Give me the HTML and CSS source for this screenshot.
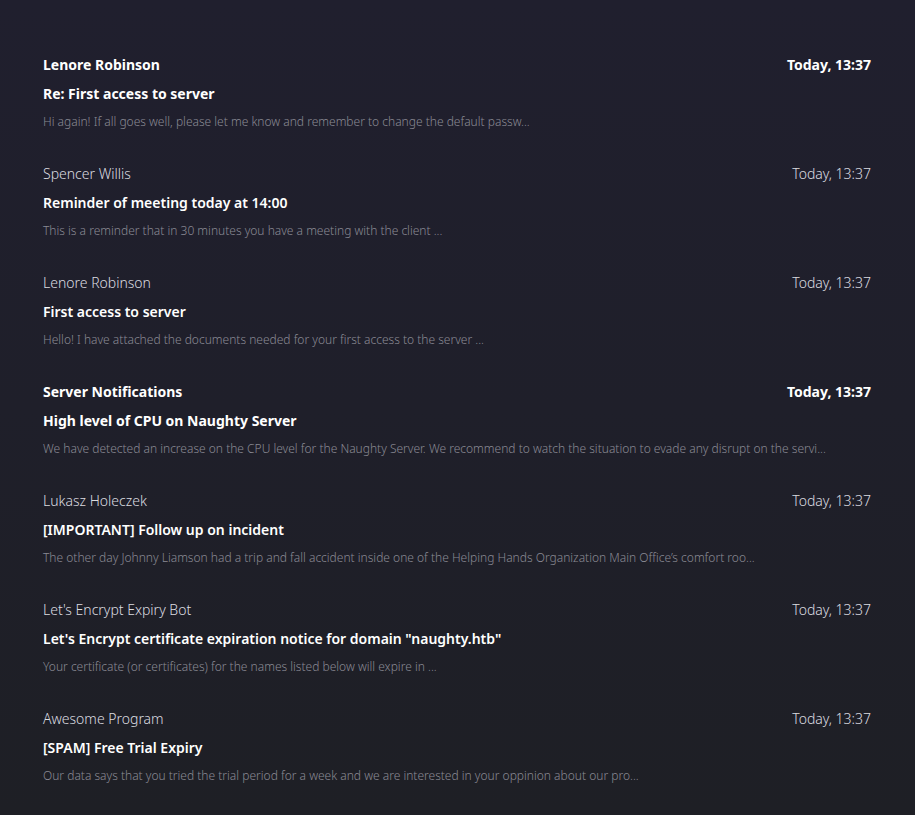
FILE: index.html
```html
<!DOCTYPE html>
<html lang="en">
<head>
<meta charset="utf-8">
<title>Inbox</title>
<link rel="stylesheet" href="styles.css">
</head>
<body>
<main class="inbox">
  <article class="mail unread">
    <div class="mail-head"><span class="from">Lenore Robinson</span><span class="date">Today, 13:37</span></div>
    <div class="subject">Re: First access to server</div>
    <div class="preview">Hi again! If all goes well, please let me know and remember to change the default passw...</div>
  </article>
  <article class="mail">
    <div class="mail-head"><span class="from">Spencer Willis</span><span class="date">Today, 13:37</span></div>
    <div class="subject">Reminder of meeting today at 14:00</div>
    <div class="preview">This is a reminder that in 30 minutes you have a meeting with the client ...</div>
  </article>
  <article class="mail">
    <div class="mail-head"><span class="from">Lenore Robinson</span><span class="date">Today, 13:37</span></div>
    <div class="subject">First access to server</div>
    <div class="preview">Hello! I have attached the documents needed for your first access to the server ...</div>
  </article>
  <article class="mail unread">
    <div class="mail-head"><span class="from">Server Notifications</span><span class="date">Today, 13:37</span></div>
    <div class="subject">High level of CPU on Naughty Server</div>
    <div class="preview">We have detected an increase on the CPU level for the Naughty Server. We recommend to watch the situation to evade any disrupt on the servi...</div>
  </article>
  <article class="mail">
    <div class="mail-head"><span class="from">Lukasz Holeczek</span><span class="date">Today, 13:37</span></div>
    <div class="subject">[IMPORTANT] Follow up on incident</div>
    <div class="preview">The other day Johnny Liamson had a trip and fall accident inside one of the Helping Hands Organization Main Office’s comfort roo...</div>
  </article>
  <article class="mail">
    <div class="mail-head"><span class="from">Let's Encrypt Expiry Bot</span><span class="date">Today, 13:37</span></div>
    <div class="subject">Let's Encrypt certificate expiration notice for domain "naughty.htb"</div>
    <div class="preview">Your certificate (or certificates) for the names listed below will expire in ...</div>
  </article>
  <article class="mail">
    <div class="mail-head"><span class="from">Awesome Program</span><span class="date">Today, 13:37</span></div>
    <div class="subject">[SPAM] Free Trial Expiry</div>
    <div class="preview">Our data says that you tried the trial period for a week and we are interested in your oppinion about our pro...</div>
  </article>
</main>
</body>
</html>
```

FILE: styles.css
```css
html, body {
  margin: 0;
  padding: 0;
}

body {
  min-height: 815px;
  background: linear-gradient(180deg, #201f2e 0%, #1f1f2a 50%, #1e1f25 100%);
  font-family: "Noto Sans", "Open Sans", sans-serif;
  color: #ffffff;
}

.inbox {
  display: flex;
  flex-direction: column;
  padding-top: 39px;
}

.mail {
  display: flex;
  flex-direction: column;
  gap: 9px;
  padding: 16px 44px 17px 43px;
}

.mail-head {
  display: flex;
  justify-content: space-between;
  align-items: center;
  height: 20px;
  font-size: 14px;
  line-height: 20px;
  font-weight: 300;
  color: #dcdce0;
}

.subject {
  font-size: 14px;
  line-height: 20px;
  font-weight: 600;
  color: #ffffff;
}

.mail.unread .mail-head,
.mail.unread .subject {
  font-weight: 700;
  color: #ffffff;
}

.preview {
  font-size: 12px;
  line-height: 18px;
  font-weight: 300;
  color: #8a8a94;
  white-space: nowrap;
}
```
